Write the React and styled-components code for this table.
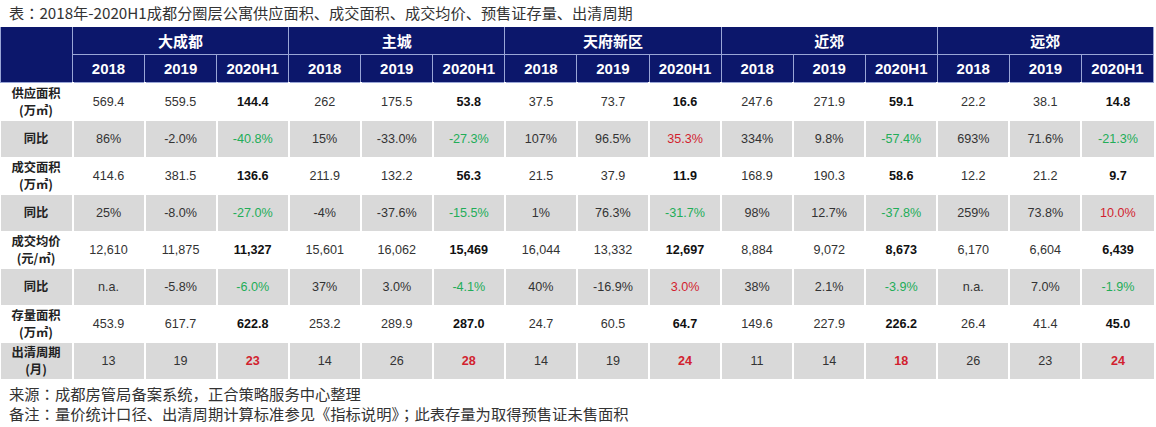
import React from "react";
import styled, { createGlobalStyle } from "styled-components";

const Global = createGlobalStyle`
  html, body { margin: 0; padding: 0; background: #ffffff; }
  body { font-family: "Liberation Sans", "Noto Sans CJK SC", sans-serif; color: #333; }
`;

const Page = styled.div`
  width: 1156px;
  height: 427px;
  overflow: hidden;
  display: flex;
  flex-direction: column;
`;

const Caption = styled.div`
  font-family: "Noto Sans CJK SC", sans-serif;
  font-size: 15.2px;
  line-height: 25px;
  height: 27px;
  padding-left: 9px;
  color: #333;
  white-space: nowrap;
`;

const Punct = styled.span`
  font-family: "Noto Sans CJK TC", sans-serif;
`;

const Table = styled.table`
  width: 1154px;
  border-collapse: collapse;
  table-layout: fixed;
`;

const HeadCell = styled.th`
  background: #0c176b;
  color: #fff;
  font-family: "Liberation Sans", "Noto Sans CJK SC", sans-serif;
  font-weight: 700;
  font-size: 15px;
  height: 27px;
  padding: 0;
  border: 1px solid #9aa6d6;
  border-top: none;
  text-align: center;
`;

const Row = styled.tr`
  background: ${(p) => (p.$shade ? "#d9d9d9" : "#ffffff")};
  height: ${(p) => (p.$shade ? "36px" : "38px")};
`;

const Label = styled.td`
  font-family: "Noto Sans CJK SC", sans-serif;
  font-weight: 700;
  font-size: 12.3px;
  color: #222;
  text-align: center;
  padding: 0;
  border-right: 2px solid #fff;
`;

const LabelLine = styled.div`
  line-height: 17px;
  height: 17px;
`;

const Cell = styled.td`
  font-family: "Liberation Sans", sans-serif;
  font-size: 12.6px;
  text-align: center;
  padding: 0;
  color: ${(p) => (p.$tone === "green" ? "#22ad58" : p.$tone === "red" ? "#d21f2f" : p.$bold ? "#111" : "#333")};
  font-weight: ${(p) => (p.$bold ? 700 : 400)};
  border-left: 2px solid #fff;
`;

const Notes = styled.div`
  font-family: "Noto Sans CJK SC", sans-serif;
  font-size: 15.3px;
  line-height: 20px;
  padding: 4px 0 0 9px;
  color: #333;
  white-space: nowrap;
`;

const regions = ["大成都", "主城", "天府新区", "近郊", "远郊"];
const years = ["2018", "2019", "2020H1"];

const rows = [
  { label: ["供应面积", "(万㎡)"], vals: ["569.4", "559.5", "144.4", "262", "175.5", "53.8", "37.5", "73.7", "16.6", "247.6", "271.9", "59.1", "22.2", "38.1", "14.8"] },
  { label: ["同比"], shade: true, vals: ["86%", "-2.0%", "-40.8%", "15%", "-33.0%", "-27.3%", "107%", "96.5%", "35.3%", "334%", "9.8%", "-57.4%", "693%", "71.6%", "-21.3%"] },
  { label: ["成交面积", "(万㎡)"], vals: ["414.6", "381.5", "136.6", "211.9", "132.2", "56.3", "21.5", "37.9", "11.9", "168.9", "190.3", "58.6", "12.2", "21.2", "9.7"] },
  { label: ["同比"], shade: true, vals: ["25%", "-8.0%", "-27.0%", "-4%", "-37.6%", "-15.5%", "1%", "76.3%", "-31.7%", "98%", "12.7%", "-37.8%", "259%", "73.8%", "10.0%"] },
  { label: ["成交均价", "(元/㎡)"], vals: ["12,610", "11,875", "11,327", "15,601", "16,062", "15,469", "16,044", "13,332", "12,697", "8,884", "9,072", "8,673", "6,170", "6,604", "6,439"] },
  { label: ["同比"], shade: true, vals: ["n.a.", "-5.8%", "-6.0%", "37%", "3.0%", "-4.1%", "40%", "-16.9%", "3.0%", "38%", "2.1%", "-3.9%", "n.a.", "7.0%", "-1.9%"] },
  { label: ["存量面积", "(万㎡)"], vals: ["453.9", "617.7", "622.8", "253.2", "289.9", "287.0", "24.7", "60.5", "64.7", "149.6", "227.9", "226.2", "26.4", "41.4", "45.0"] },
  { label: ["出清周期", "(月)"], shade: true, redBold: true, vals: ["13", "19", "23", "14", "26", "28", "14", "19", "24", "11", "14", "18", "26", "23", "24"] },
];

function toneFor(row, i, v) {
  if (i % 3 !== 2) return { tone: null, bold: false };
  if (row.redBold) return { tone: "red", bold: true };
  if (row.shade) return { tone: v.startsWith("-") ? "green" : "red", bold: false };
  return { tone: null, bold: true };
}

export default function App() {
  return (
    <Page>
      <Global />
      <Caption>
        表<Punct>：</Punct>2018年-2020H1成都分圈层公寓供应面积、成交面积、成交均价、预售证存量、出清周期
      </Caption>
      <Table>
        <colgroup>
          <col style={{ width: "72px" }} />
          {Array.from({ length: 15 }).map((_, i) => (
            <col key={i} />
          ))}
        </colgroup>
        <thead>
          <tr>
            <HeadCell rowSpan={2} />
            {regions.map((r) => (
              <HeadCell key={r} colSpan={3}>{r}</HeadCell>
            ))}
          </tr>
          <tr>
            {regions.map((r) =>
              years.map((y) => <HeadCell key={r + y}>{y}</HeadCell>)
            )}
          </tr>
        </thead>
        <tbody>
          {rows.map((row, ri) => (
            <Row key={ri} $shade={row.shade}>
              <Label>
                {row.label.map((l, li) => (
                  <LabelLine key={li}>{l}</LabelLine>
                ))}
              </Label>
              {row.vals.map((v, i) => {
                const { tone, bold } = toneFor(row, i, v);
                return (
                  <Cell key={i} $tone={tone} $bold={bold}>
                    {v}
                  </Cell>
                );
              })}
            </Row>
          ))}
        </tbody>
      </Table>
      <Notes>
        <div>来源<Punct>：</Punct>成都房管局备案系统，正合策略服务中心整理</div>
        <div>备注<Punct>：</Punct>量价统计口径、出清周期计算标准参见《指标说明》<Punct>；</Punct>此表存量为取得预售证未售面积</div>
      </Notes>
    </Page>
  );
}
